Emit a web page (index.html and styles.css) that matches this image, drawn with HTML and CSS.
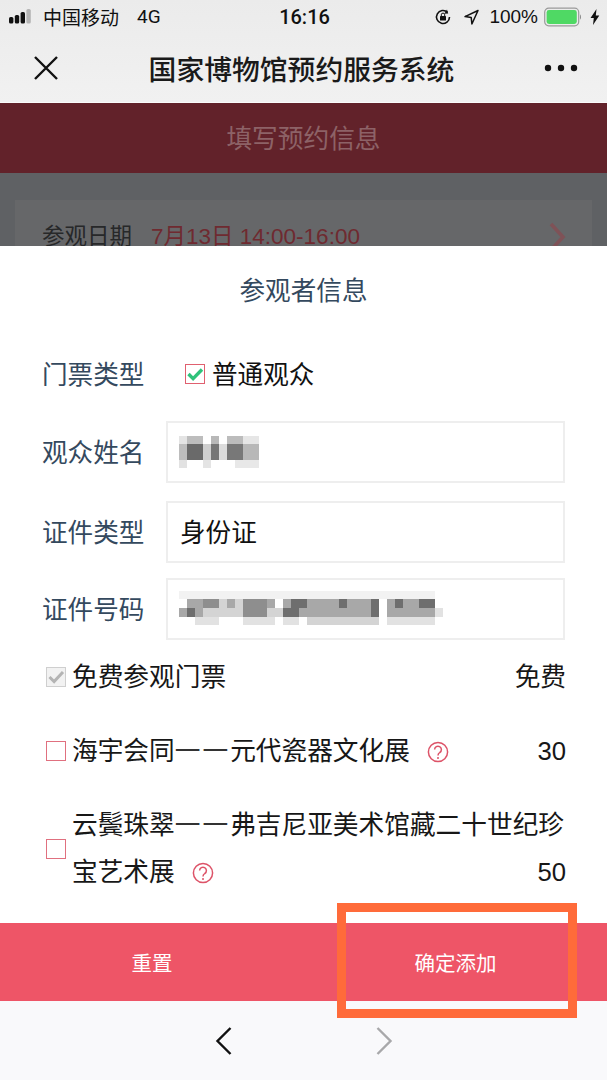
FILE: index.html
```html
<!DOCTYPE html>
<html lang="zh-CN">
<head>
<meta charset="utf-8">
<title>国家博物馆预约服务系统</title>
<link rel="stylesheet" href="styles.css">
</head>
<body>
<div class="phone">
  <header class="chrome">
    <div class="status">
      <div class="status-left">
        <svg class="signal" width="24" height="20" viewBox="0 0 24 20"><rect x="0" y="10" width="4.4" height="6.5" rx="1.6" fill="#111"/><rect x="5.8" y="8" width="4.4" height="8.5" rx="1.6" fill="#111"/><rect x="11.6" y="5" width="4.4" height="11.5" rx="1.6" fill="#111"/><rect x="17.4" y="2" width="4.4" height="14.5" rx="1.6" fill="#b5b5b5"/></svg>
        <span class="carrier">中国移动</span>
        <span class="net">4G</span>
      </div>
      <div class="clock">16:16</div>
      <div class="status-right">
        <svg width="18" height="18" viewBox="0 0 18 18"><path d="M15.5 9a6.5 6.5 0 1 1-2-4.7" fill="none" stroke="#111" stroke-width="1.6"/><path d="M13 1.6l1.2 3.9-3.9.3z" fill="#111"/><rect x="6" y="8" width="6" height="4.6" rx=".6" fill="#111"/><path d="M7.3 8V6.8a1.7 1.7 0 0 1 3.4 0V8" fill="none" stroke="#111" stroke-width="1"/></svg>
        <svg class="loc" width="15" height="16" viewBox="0 0 15 16"><path d="M14 1.5L1 7.6l6.2.9.7 6.5z" fill="none" stroke="#111" stroke-width="1.5" stroke-linejoin="round"/></svg>
        <span class="pct">100%</span>
        <svg class="batt" width="38" height="20" viewBox="0 0 38 20"><rect x=".7" y="1.2" width="34" height="17.6" rx="4" fill="none" stroke="#9a9a9a" stroke-width="1.2"/><rect x="2.6" y="3" width="30.2" height="14" rx="2.4" fill="#4fd964"/><path d="M36 7.5c1.3.4 1.3 4.6 0 5z" fill="#8a8a8a"/></svg>
        <svg width="10" height="16" viewBox="0 0 10 16"><path d="M6.5 0L.5 9h3.3L3 16l6.3-9.5H5.8z" fill="#111"/></svg>
      </div>
    </div>
    <nav class="nav">
      <svg class="nav-close" width="26" height="26" viewBox="0 0 26 26"><path d="M2 2l22 22M24 2L2 24" stroke="#111" stroke-width="2.4" fill="none"/></svg>
      <h1 class="nav-title">国家博物馆预约服务系统</h1>
      <svg class="nav-more" width="34" height="8" viewBox="0 0 34 8"><circle cx="4" cy="4" r="3.2" fill="#111"/><circle cx="17" cy="4" r="3.2" fill="#111"/><circle cx="30" cy="4" r="3.2" fill="#111"/></svg>
    </nav>
  </header>

  <main class="page">
    <div class="page-head"><span class="lift">填写预约信息</span></div>
    <div class="page-body">
      <div class="date-card">
        <span class="date-label">参观日期</span>
        <span class="date-value">7月13日 14:00-16:00</span>
        <svg class="date-arrow" width="18" height="30" viewBox="0 0 18 30"><path d="M3 2l12 13L3 28" fill="none" stroke="#7f5257" stroke-width="3.6"/></svg>
      </div>
    </div>

    <section class="sheet">
      <h2 class="sheet-title">参观者信息</h2>
      <div class="type-row">
        <span class="label">门票类型</span>
        <span class="box box-on">
          <svg width="18" height="18" viewBox="0 0 18 18"><path d="M2.5 9l4.6 4.6L16 4.5" fill="none" stroke="#2fc27a" stroke-width="3.4"/></svg>
        </span>
        <span class="type-name">普通观众</span>
      </div>
      <div class="field first">
        <span class="label">观众姓名</span>
        <div class="input">
          <svg class="blur" width="82" height="34" viewBox="0 0 82 34"><rect x="0" y="1" width="8" height="8" fill="#e4e4e4"/><rect x="8" y="1" width="16" height="8" fill="#bdbdbd"/><rect x="32" y="1" width="8" height="8" fill="#b8b8b8"/><rect x="48" y="1" width="16" height="8" fill="#bcbcbc"/><rect x="64" y="1" width="16" height="8" fill="#e6e6e6"/><rect x="0" y="9" width="8" height="16" fill="#bdbdbd"/><rect x="8" y="9" width="16" height="16" fill="#6a6a6a"/><rect x="24" y="9" width="8" height="16" fill="#cfcfcf"/><rect x="32" y="9" width="8" height="16" fill="#767676"/><rect x="40" y="9" width="8" height="16" fill="#dcdcdc"/><rect x="48" y="9" width="16" height="16" fill="#787878"/><rect x="64" y="9" width="16" height="16" fill="#b8b8b8"/><rect x="0" y="25" width="8" height="8" fill="#e2e2e2"/><rect x="24" y="25" width="8" height="8" fill="#e4e4e4"/><rect x="56" y="25" width="24" height="8" fill="#e8e8e8"/></svg>
        </div>
      </div>
      <div class="field second">
        <span class="label">证件类型</span>
        <div class="input"><span class="input-text">身份证</span></div>
      </div>
      <div class="field third">
        <span class="label">证件号码</span>
        <div class="input">
          <svg class="blur" width="270" height="36" viewBox="0 0 270 36"><path d="M0 0h256v8H0z" fill="#f2f2f2"/><path d="M8 8h16v9H8zM48 8h8v9h-8zM88 8h8v9h-8zM104 8h8v9h-8zM128 8h32v9h-32zM168 8h24v9h-24zM208 8h8v9h-8zM224 8h16v9h-16zM0 17h8v9H0zM16 17h8v9h-8zM120 17h72v9h-72zM208 17h48v9h-48z" fill="#a8a8a8"/><path d="M24 8h16v9H24zM64 8h24v9H64zM64 17h24v9H64z" fill="#8e8e8e"/><path d="M112 8h16v9h-16zM160 8h8v9h-8zM192 8h8v9h-8zM216 8h8v9h-8zM240 8h16v9h-16zM8 17h8v9H8zM192 17h8v9h-8zM104 17h16v9h-16z" fill="#6e6e6e"/><path d="M40 8h8v9h-8zM56 8h8v9h-8zM24 17h40v9H24zM88 17h16v9H88zM128 26h72v8h-72z" fill="#d4d4d4"/><path d="M16 26h24v8H16zM64 26h32v8H64zM104 26h16v8h-16zM208 26h48v8h-48zM256 17h8v9h-8z" fill="#e2e2e2"/></svg>
        </div>
      </div>

      <div class="tickets">
        <div class="ticket free">
          <span class="box box-off">
            <svg width="18" height="18" viewBox="0 0 18 18"><path d="M2.5 9l4.6 4.6L16 4" fill="none" stroke="#b4b4b4" stroke-width="3"/></svg>
          </span>
          <span class="ticket-name">免费参观门票</span>
          <span class="price">免费</span>
        </div>
        <div class="ticket sea">
          <span class="box box-empty"></span>
          <span class="ticket-name">海宇会同<span class="dash">一一</span>元代瓷器文化展<svg class="help" width="22" height="22" viewBox="0 0 22 22"><circle cx="11" cy="11" r="9.6" fill="none" stroke="#dd5368" stroke-width="1.5"/><path d="M7.6 8.6a3.4 3.4 0 1 1 5.2 2.9c-1.2.8-1.8 1.4-1.8 3" fill="none" stroke="#dd5368" stroke-width="1.5"/><circle cx="11" cy="17" r="1" fill="#dd5368"/></svg></span>
          <span class="price">30</span>
        </div>
        <div class="ticket cloud">
          <span class="box box-empty"></span>
          <div class="ticket-lines">
            <div class="ticket-line">云鬓珠翠<span class="dash">一一</span>弗吉尼亚美术馆藏二十世纪珍</div>
            <div class="ticket-line split">
              <span>宝艺术展<svg class="help" width="22" height="22" viewBox="0 0 22 22"><circle cx="11" cy="11" r="9.6" fill="none" stroke="#dd5368" stroke-width="1.5"/><path d="M7.6 8.6a3.4 3.4 0 1 1 5.2 2.9c-1.2.8-1.8 1.4-1.8 3" fill="none" stroke="#dd5368" stroke-width="1.5"/><circle cx="11" cy="17" r="1" fill="#dd5368"/></svg></span>
              <span class="price">50</span>
            </div>
          </div>
        </div>
      </div>

      <div class="actions">
        <button class="action" type="button">重置</button>
        <button class="action" type="button">确定添加</button>
      </div>
    </section>
    <div class="callout"></div>
  </main>

  <footer class="toolbar">
    <svg width="18" height="30" viewBox="0 0 18 30"><path d="M15.5 2L2.5 15l13 13" fill="none" stroke="#111" stroke-width="2.4"/></svg>
    <svg width="18" height="30" viewBox="0 0 18 30"><path d="M2.5 2l13 13-13 13" fill="none" stroke="#a8a8aa" stroke-width="2.4"/></svg>
  </footer>
</div>
</body>
</html>
```
FILE: styles.css
```css
* { box-sizing: border-box; }
html, body { margin: 0; padding: 0; }
body {
  font-family: "Liberation Sans", "Noto Sans CJK SC", sans-serif;
  background: #fff;
  color: #111;
}
.phone {
  width: 607px;
  height: 1080px;
  display: flex;
  flex-direction: column;
  overflow: hidden;
}
.chrome {
  height: 103px;
  flex: none;
  background: linear-gradient(#ebebeb, #f1f1f1);
  border-bottom: 1px solid #fafafa;
}
.status {
  height: 33px;
  display: grid;
  grid-template-columns: 1fr auto 1fr;
  align-items: center;
  padding: 0 7px 0 9px;
  font-size: 19px;
}
.status-left, .status-right { display: flex; align-items: center; }
.status-right { justify-content: flex-end; }
.signal { margin-right: 10px; }
.carrier { width: 76px; }
.net { margin-left: 18px; font-family: Roboto, sans-serif; }
.clock { font-family: Roboto, sans-serif; font-weight: 500; font-size: 20px; }
.loc { margin-left: 12px; }
.pct { margin-left: 10px; }
.batt { margin: 0 8px 0 6px; }
.nav {
  height: 69px;
  display: flex;
  align-items: center;
  justify-content: space-between;
  padding: 0 29px 0 33px;
}
.nav-title {
  margin: 0;
  font-size: 27.8px;
  font-weight: 500;
  color: #1a1a1a;
}
.page {
  position: relative;
  flex: 1;
  min-height: 0;
  background: #5f6164;
}
.page-head {
  height: 70px;
  background: #62222a;
  color: #8d6267;
  font-size: 25.7px;
  display: flex;
  align-items: center;
  justify-content: center;
  padding-bottom: 4px;
}
.page-body { padding: 27px 15px 0; }
.date-card {
  height: 80px;
  background: #666769;
  padding: 20px 27px;
  display: flex;
  align-items: flex-start;
  font-size: 22.5px;
  line-height: 34px;
  position: relative;
}
.date-label { color: #272829; }
.date-value { color: #6f2a30; margin-left: 19px; }
.date-arrow { position: absolute; right: 26px; top: 22px; }
.sheet {
  position: absolute;
  left: 0;
  right: 0;
  top: 143px;
  bottom: 0;
  background: #fff;
  display: flex;
  flex-direction: column;
}
.sheet-title {
  margin: 0;
  height: 88px;
  display: flex;
  align-items: center;
  justify-content: center;
  font-size: 25.6px;
  font-weight: 400;
  color: #34495e;
  padding-bottom: 4px;
}
.label { color: #34495e; font-size: 25.6px; width: 124px; flex: none; padding-bottom: 4px; }
.type-row {
  margin-top: 20px;
  height: 40px;
  padding-left: 42px;
  display: flex;
  align-items: center;
}
.type-name { font-size: 25.6px; margin-left: 7px; padding-bottom: 4px; }
.box {
  width: 20px;
  height: 20px;
  flex: none;
  display: flex;
  align-items: center;
  justify-content: center;
  background: #fff;
}
.box-on { border: 1px solid #e0606f; margin-left: 19px; }
.box-off { border: 1px solid #cfcfcf; background: #f2f2f2; }
.box-empty { border: 1px solid #e0707f; }
.field {
  height: 62px;
  padding: 0 42px;
  display: flex;
  align-items: center;
}
.field.first { margin-top: 27px; }
.field.second { margin-top: 18px; }
.field.third { margin-top: 15px; }
.input {
  flex: 1;
  height: 62px;
  border: 2px solid #eeeeee;
  display: flex;
  align-items: center;
  padding-left: 11px;
}
.input-text { font-size: 25.6px; padding-left: 1px; padding-bottom: 4px; }
.blur { filter: blur(0.7px); }
.tickets { flex: 1; padding: 0 41px 0 46px; }
.ticket {
  display: flex;
  align-items: center;
  font-size: 25.7px;
  line-height: 48px;
  color: #171717;
}
.ticket-name { margin-left: 6px; flex: 1; min-width: 0; }
.ticket-lines { margin-left: 6px; flex: 1; min-width: 0; line-height: 47px; }
.ticket-line { white-space: nowrap; }
.split { display: flex; justify-content: space-between; }
.free { margin-top: 13px; }
.sea { margin-top: 26px; }
.cloud { margin-top: 27px; }
.dash { color: #333; letter-spacing: 2px; }
.price { flex: none; }
.help { margin-left: 17px; vertical-align: -3px; }
.actions {
  height: 78px;
  flex: none;
  display: grid;
  grid-template-columns: 304px 1fr;
  background: #ee5567;
}
.action {
  border: 0;
  background: transparent;
  color: #fff;
  font: inherit;
  font-size: 20.5px;
  padding: 0;
}
.callout {
  position: absolute;
  left: 337px;
  top: 800px;
  width: 240px;
  height: 115px;
  border: 9px solid #ff6b3a;
  pointer-events: none;
}
.toolbar {
  height: 79px;
  flex: none;
  background: #f9f9fb;
  display: flex;
  align-items: center;
  justify-content: center;
  gap: 142px;
}
```
